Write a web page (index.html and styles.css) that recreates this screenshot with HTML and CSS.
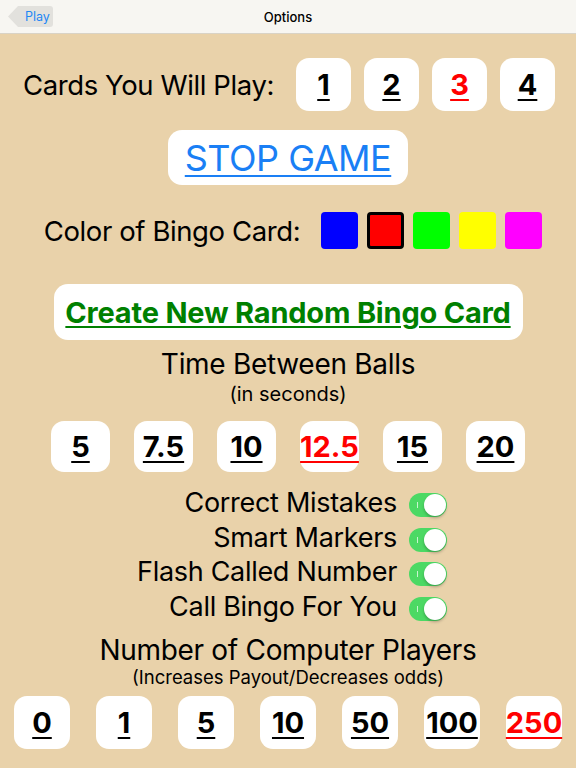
FILE: index.html
```html
<!DOCTYPE html>
<html lang="en">
<head>
    <meta charset="UTF-8">
    <meta name="viewport" content="width=device-width, initial-scale=1.0">
    <title>Options</title>
    <link rel="stylesheet" href="styles.css">
</head>
<body>
    <div class="navbar">
        <a class="back" href="#">Play</a>
        <div class="nav-title">Options</div>
    </div>

    <div class="options">
        <div class="row cards-row">
            <span class="label">Cards You Will Play:</span>
            <div class="choices">
                <a class="pick" href="#">1</a>
                <a class="pick" href="#">2</a>
                <a class="pick selected" href="#">3</a>
                <a class="pick" href="#">4</a>
            </div>
        </div>

        <a class="big-btn stop" href="#">STOP GAME</a>

        <div class="row color-row">
            <span class="label">Color of Bingo Card:</span>
            <div class="swatches">
                <span class="swatch blue"></span>
                <span class="swatch red current"></span>
                <span class="swatch green"></span>
                <span class="swatch yellow"></span>
                <span class="swatch magenta"></span>
            </div>
        </div>

        <a class="big-btn create" href="#">Create New Random Bingo Card</a>

        <div class="heading">Time Between Balls</div>
        <div class="subheading">(in seconds)</div>
        <div class="choices time-choices">
            <a class="pick" href="#">5</a>
            <a class="pick" href="#">7.5</a>
            <a class="pick" href="#">10</a>
            <a class="pick selected" href="#">12.5</a>
            <a class="pick" href="#">15</a>
            <a class="pick" href="#">20</a>
        </div>

        <div class="toggles">
            <div class="toggle-row"><span>Correct Mistakes</span><span class="switch"></span></div>
            <div class="toggle-row"><span>Smart Markers</span><span class="switch"></span></div>
            <div class="toggle-row"><span>Flash Called Number</span><span class="switch"></span></div>
            <div class="toggle-row"><span>Call Bingo For You</span><span class="switch"></span></div>
        </div>

        <div class="heading players">Number of Computer Players</div>
        <div class="subheading small">(Increases Payout/Decreases odds)</div>
        <div class="choices player-choices">
            <a class="pick" href="#">0</a>
            <a class="pick" href="#">1</a>
            <a class="pick" href="#">5</a>
            <a class="pick" href="#">10</a>
            <a class="pick" href="#">50</a>
            <a class="pick" href="#">100</a>
            <a class="pick selected" href="#">250</a>
        </div>
    </div>
</body>
</html>
```

FILE: styles.css
```css
body {
    margin: 0;
    padding: 0;
    background-color: #e9d2aa;
    font-family: Inter, 'Liberation Sans', sans-serif;
    color: #000;
    height: 768px;
    overflow: hidden;
}
.navbar {
    height: 33px;
    background-color: #f7f6f2;
    border-bottom: 1px solid #d9d3c6;
    display: flex;
    align-items: center;
    justify-content: center;
    position: relative;
}
.nav-title {
    font-size: 13px;
    font-weight: 500;
}
.back {
    position: absolute;
    left: 8px;
    top: 6px;
    height: 21px;
    width: 45px;
    box-sizing: border-box;
    padding-left: 17px;
    line-height: 21px;
    font-size: 12.5px;
    color: #1e88f5;
    text-decoration: none;
    background-color: #e2e1dd;
    border-radius: 0 3px 3px 0;
    clip-path: polygon(10px 0, 100% 0, 100% 100%, 10px 100%, 0 50%);
}
.options {
    display: flex;
    flex-direction: column;
    align-items: center;
}
.row {
    display: flex;
    align-items: center;
}
.label {
    font-size: 27.5px;
    letter-spacing: -0.4px;
}
.choices {
    display: flex;
}
.pick {
    display: flex;
    align-items: center;
    justify-content: center;
    background-color: #fff;
    border-radius: 13px;
    color: #000;
    font-weight: 700;
    font-size: 29px;
    text-decoration: underline;
    text-decoration-thickness: 2px;
    text-underline-offset: 4px;
}
.pick.selected {
    color: #ff0000;
}
.cards-row {
    margin-top: 24px;
    margin-left: 2px;
}
.cards-row .choices {
    margin-left: 22px;
    gap: 13px;
}
.cards-row .pick {
    width: 55px;
    height: 53px;
}
.big-btn {
    background-color: #fff;
    border-radius: 14px;
    text-decoration: underline;
    display: flex;
    align-items: center;
    justify-content: center;
}
.stop {
    margin-top: 19px;
    width: 240px;
    height: 55px;
    color: #1a7ff5;
    font-size: 36px;
    text-decoration-thickness: 2px;
    text-underline-offset: 4px;
    letter-spacing: -0.5px;
}
.color-row {
    margin-top: 27px;
    margin-left: 10px;
}
.swatches {
    display: flex;
    gap: 9px;
    margin-left: 21px;
}
.swatch {
    width: 37px;
    height: 37px;
    border-radius: 4px;
    box-sizing: border-box;
}
.blue { background-color: #0000ff; }
.red { background-color: #ff0000; }
.green { background-color: #00ff00; }
.yellow { background-color: #ffff00; }
.magenta { background-color: #ff00ff; }
.swatch.current {
    border: 3px solid #000;
}
.create {
    margin-top: 35px;
    width: 469px;
    height: 56px;
    color: #008000;
    font-weight: 700;
    font-size: 29px;
    letter-spacing: -0.2px;
    text-decoration-thickness: 2px;
    text-underline-offset: 3px;
}
.heading {
    font-size: 28px;
    line-height: 32px;
    margin-top: 8px;
    letter-spacing: -0.3px;
}
.subheading {
    font-size: 20px;
    line-height: 24px;
    margin-top: 2px;
}
.time-choices {
    margin-top: 15px;
    gap: 24px;
}
.time-choices .pick {
    width: 59px;
    height: 51px;
}
.toggles {
    display: flex;
    flex-direction: column;
    align-items: flex-end;
    width: 576px;
    box-sizing: border-box;
    padding-right: 129px;
    margin-top: 13.5px;
}
.toggle-row {
    display: flex;
    align-items: center;
    height: 34.5px;
    font-size: 27px;
    letter-spacing: -0.3px;
}
.switch {
    position: relative;
    width: 38px;
    height: 24px;
    margin-left: 12px;
    margin-top: 5px;
    border-radius: 12px;
    background-color: #4cd964;
}
/* small "on" tick and the white knob */
.switch::before {
    content: '';
    position: absolute;
    left: 8px;
    top: 9px;
    width: 1px;
    height: 6px;
    background-color: rgba(255, 255, 255, 0.7);
}
.switch::after {
    content: '';
    position: absolute;
    right: 1px;
    top: 1px;
    width: 22px;
    height: 22px;
    border-radius: 50%;
    background-color: #fff;
    box-shadow: 0 2px 3px rgba(0, 0, 0, 0.25);
}
.players {
    margin-top: 10.5px;
}
.subheading.small {
    font-size: 18.5px;
    line-height: 22px;
    margin-top: 0;
}
.player-choices {
    margin-top: 8px;
    gap: 26px;
}
.player-choices .pick {
    width: 56px;
    height: 53px;
}
```
